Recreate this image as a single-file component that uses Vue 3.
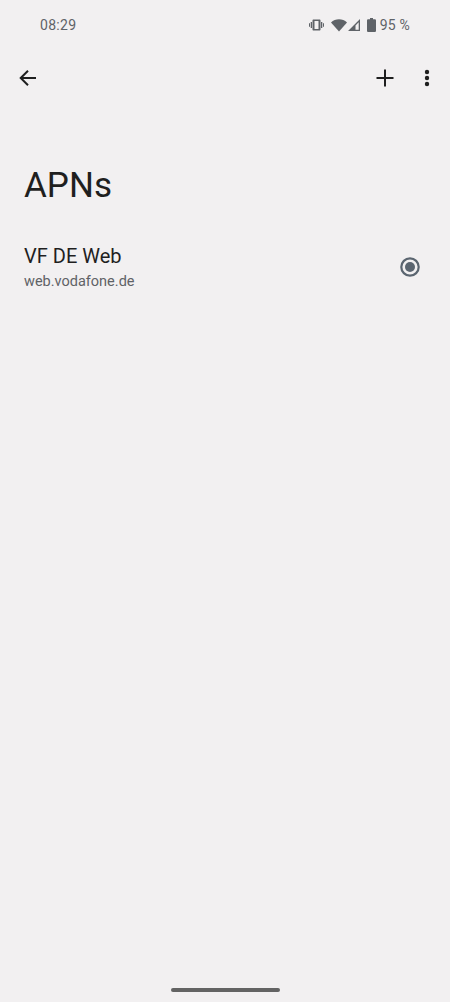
<script setup>
const apn = { name: 'VF DE Web', host: 'web.vodafone.de' }
</script>

<template>
  <div class="screen">
    <div class="status">
      <span class="time">08:29</span>
      <div class="status-icons">
        <svg class="i-vib" width="15" height="14" viewBox="0 0 15 14"><path fill="#5f6368" fill-rule="evenodd" d="M4.500 1.500h6c.6 0 1 .4 1 1v9c0 .6-.4 1-1 1h-6c-.6 0-1-.4-1-1v-9c0-.6.400-1 1-1zM5.500 3v8h4V3zM1.700 4H3v6H1.700zM12 4h1.300v6H12zM0 5.300h1v3.400H0zM14 5.300h1v3.400h-1z"/></svg>
        <svg class="i-wifi" width="16" height="13" viewBox="0 0 16 13"><path fill="#5f6368" d="M0 3.400C2.200 1.200 5 .2 8 .2s5.800 1 8 3.200L8 12.600z"/></svg>
        <svg class="i-sig" width="12" height="12" viewBox="0 0 12 12"><path fill="#5f6368" fill-rule="evenodd" d="M12 0v12H0zM10.700 3.200 7.500 6.400v4.300h3.200z"/></svg>
        <svg class="i-bat" width="9" height="14" viewBox="0 0 9 14"><path fill="#5f6368" d="M3 0h3v1.300h1.700c.7 0 1.300.5 1.300 1.200v10.200c0 .7-.6 1.300-1.300 1.300H1.300C.6 14 0 13.400 0 12.700V2.500c0-.7.600-1.200 1.300-1.200H3z"/></svg>
        <span class="pct">95 %</span>
      </div>
    </div>

    <div class="toolbar">
      <svg width="24" height="24" viewBox="0 0 24 24"><path fill="none" stroke="#1f1f1f" stroke-width="2" d="M20 12H5M12 4.700 4.700 12l7.300 7.300"/></svg>
      <div class="actions">
        <svg width="24" height="24" viewBox="0 0 24 24"><path fill="none" stroke="#1f1f1f" stroke-width="2" d="M12 3.500v17M3.500 12h17"/></svg>
        <svg class="more" width="24" height="24" viewBox="0 0 24 24"><g fill="#1f1f1f"><circle cx="12" cy="6" r="2.200"/><circle cx="12" cy="12" r="2.200"/><circle cx="12" cy="18" r="2.200"/></g></svg>
      </div>
    </div>

    <h1 class="title">APNs</h1>

    <div class="row">
      <div class="text">
        <div class="name">{{ apn.name }}</div>
        <div class="host">{{ apn.host }}</div>
      </div>
      <svg width="20" height="20" viewBox="0 0 20 20"><circle cx="10" cy="10" r="8.700" fill="none" stroke="#5b6570" stroke-width="2.200"/><circle cx="10" cy="10" r="5" fill="#5b6570"/></svg>
    </div>

    <div class="spacer"></div>
    <div class="home-wrap"><div class="home"></div></div>
  </div>
</template>

<style>
html, body { margin: 0; background: #f2f0f1; }
</style>

<style scoped>
.screen {
  width: 450px;
  height: 1002px;
  background: #f2f0f1;
  display: flex;
  flex-direction: column;
  font-family: Roboto, "Noto Sans", sans-serif;
  overflow: hidden;
}
.status {
  height: 50px;
  box-sizing: border-box;
  padding: 0 40px;
  display: flex;
  align-items: center;
  justify-content: space-between;
  color: #5f6368;
  font-size: 14px;
}
.time { letter-spacing: 0.3px; }
.status-icons { display: flex; align-items: center; }
.i-vib { margin-right: 7px; }
.i-wifi { margin-right: 1px; }
.i-sig { margin-right: 7px; }
.i-bat { margin-right: 4px; }
.pct { letter-spacing: 0.2px; }
.toolbar {
  height: 56px;
  padding: 0 11px 0 16px;
  display: flex;
  align-items: center;
  justify-content: space-between;
}
.actions { display: flex; align-items: center; gap: 18px; }
.title {
  margin: 56px 0 0;
  padding-left: 24px;
  font-size: 35px;
  line-height: 48px;
  font-weight: 400;
  color: #1f1f1f;
}
.row {
  margin-top: 29px;
  padding: 0 30px 0 24px;
  display: flex;
  align-items: center;
  justify-content: space-between;
}
.text { padding-top: 3px; }
.name { font-size: 20px; line-height: 28px; color: #1f1f1f; }
.host { font-size: 14.500px; line-height: 24px; color: #5f6266; }
.spacer { flex: 1; }
.home-wrap { height: 14px; display: flex; justify-content: center; }
.home { width: 109px; height: 4px; border-radius: 2px; background: #636363; }
</style>
